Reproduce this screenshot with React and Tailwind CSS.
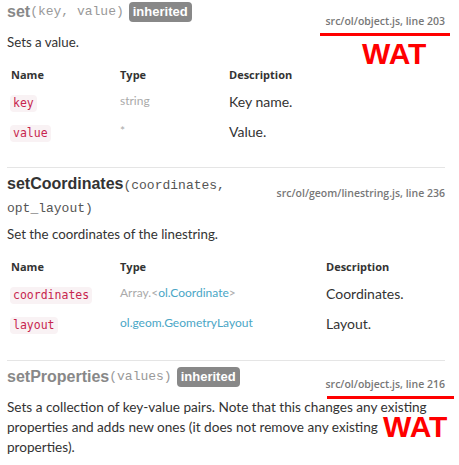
import React from "react";

const body = "font-['Lato','Open_Sans',sans-serif]";
const mono = "font-['Liberation_Mono','Courier_New',monospace]";
const codeFont = "font-['DejaVu_Sans_Mono',monospace]";
const src = "font-['Open_Sans',sans-serif] text-[10.5px] leading-[12px] font-semibold text-[#777] whitespace-nowrap";
const head = "font-['Liberation_Sans',Arial,sans-serif] text-[16px]";

function Badge() {
  return (
    <span className="ml-[5px] inline-flex h-[20px] items-center rounded-[4px] bg-[#888] px-[4px] font-['Liberation_Sans',Arial,sans-serif] text-[13px] font-bold text-white">
      inherited
    </span>
  );
}

function Code({ children }) {
  return (
    <span className={`inline-flex h-[17px] items-center rounded-[4px] bg-[#f9f2f4] px-[3px] ${codeFont} text-[11.5px] text-[#c7254e]`}>
      {children}
    </span>
  );
}

function ParamTable({ cols, rows }) {
  return (
    <div className={`mt-[13px] pl-[3px] ${body}`}>
      <div className={`grid h-[20px] items-center ${cols} font-['Open_Sans',sans-serif] text-[11px] font-bold text-[#333]`}>
        <span className="pl-[1px]">Name</span>
        <span>Type</span>
        <span>Description</span>
      </div>
      <div className="mt-[1px]">
        {rows.map((r) => (
          <div key={r.name} className={`grid h-[30px] items-center ${cols}`}>
            <span>
              <Code>{r.name}</Code>
            </span>
            <span className="text-[12px]">{r.type}</span>
            <span className="text-[14px] text-[#333]">{r.desc}</span>
          </div>
        ))}
      </div>
    </div>
  );
}

export default function App() {
  return (
    <div className="relative h-[465px] w-[459px] overflow-hidden bg-white pl-[7px] pr-[14px] text-[#333]">
      {/* set */}
      <section>
        <div className="flex items-start justify-between">
          <h4 className={`flex h-[23px] items-center ${head}`}>
            <span className="font-bold text-[#888]">set</span>
            <span className={`${mono} text-[13px] text-[#999]`}>(key, value)</span>
            <Badge />
          </h4>
          <div className={`pt-[15px] ${src}`}>src/ol/object.js, line 203</div>
        </div>
        <p className={`mt-[5px] ${body} text-[13.3px] leading-[20px] text-[#333]`}>Sets a value.</p>
        <ParamTable
          cols="grid-cols-[110px_109px_1fr]"
          rows={[
            { name: "key", type: <span className="text-[#aaa]">string</span>, desc: "Key name." },
            { name: "value", type: <span className="text-[#aaa]">*</span>, desc: "Value." },
          ]}
        />
      </section>

      <hr className="mt-[21px] border-[#e5e5e5]" />

      {/* setCoordinates */}
      <section className="pt-[4px]">
        <div className="flex items-start justify-between gap-[10px]">
          <h4 className={`${head} leading-[23px]`}>
            <span className="font-bold text-[#333]">setCoordinates</span>
            <span className={`${mono} text-[13px] leading-none text-[#555]`}>(coordinates, opt_layout)</span>
          </h4>
          <div className={`pt-[15px] ${src}`}>src/ol/geom/linestring.js, line 236</div>
        </div>
        <p className={`mt-[6px] ${body} text-[13.3px] leading-[20px] text-[#333]`}>Set the coordinates of the linestring.</p>
        <ParamTable
          cols="grid-cols-[110px_206px_1fr]"
          rows={[
            {
              name: "coordinates",
              type: (
                <>
                  <span className="text-[#aaa]">Array.&lt;</span>
                  <span className="text-[#4aa6c6]">ol.Coordinate</span>
                  <span className="text-[#aaa]">&gt;</span>
                </>
              ),
              desc: "Coordinates.",
            },
            { name: "layout", type: <span className="text-[#4aa6c6]">ol.geom.GeometryLayout</span>, desc: "Layout." },
          ]}
        />
      </section>

      <hr className="mt-[22px] border-[#e5e5e5]" />

      {/* setProperties */}
      <section className="pt-[6px]">
        <div className="flex items-start justify-between">
          <h4 className={`flex h-[20px] items-center ${head}`}>
            <span className="font-bold text-[#888]">setProperties</span>
            <span className={`${mono} text-[13px] text-[#999]`}>(values)</span>
            <Badge />
          </h4>
          <div className={`pt-[11px] ${src}`}>src/ol/object.js, line 216</div>
        </div>
        <p className={`mt-[7px] ${body} text-[13.6px] leading-[20px] text-[#333]`}>
          Sets a collection of key-value pairs. Note that this changes any existing properties and adds new ones (it does not remove any existing properties).
        </p>
      </section>

      {/* annotations */}
      <div className="absolute left-[320px] top-[33px] h-[3px] w-[130px] bg-[#ff0000]" />
      <div className="absolute left-[362px] top-[39px] font-['Liberation_Sans',Arial,sans-serif] text-[30px] font-bold leading-[30px] text-[#ff0000]">WAT</div>
      <div className="absolute left-[327px] top-[396px] h-[3px] w-[127px] bg-[#ff0000]" />
      <div className="absolute left-[383px] top-[412px] font-['Liberation_Sans',Arial,sans-serif] text-[30px] font-bold leading-[30px] text-[#ff0000]">WAT</div>
    </div>
  );
}
